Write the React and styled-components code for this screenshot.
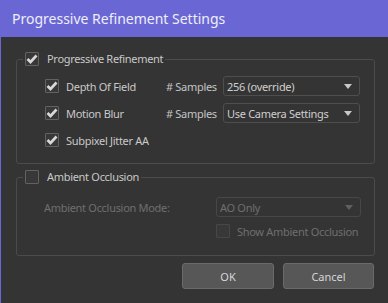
import React from "react";
import styled, { createGlobalStyle } from "styled-components";

const GlobalStyle = createGlobalStyle`
  html, body {
    margin: 0;
    padding: 0;
    background: #333333;
  }
  * {
    box-sizing: border-box;
  }
`;

const Window = styled.div`
  width: 388px;
  height: 303px;
  display: flex;
  flex-direction: column;
  background: #343434;
  border-left: 1px solid #6a67d5;
  font-family: "Noto Sans", "Open Sans", sans-serif;
  font-size: 11px;
  letter-spacing: -0.3px;
  color: #c9c9c9;
  overflow: hidden;
`;

const TitleBar = styled.div`
  height: 37px;
  flex: none;
  display: flex;
  align-items: center;
  padding-left: 11px;
  background: #6a67d5;
  color: #eeeef8;
  font-size: 14px;
  letter-spacing: 0;
`;

const Content = styled.div`
  flex: 1;
  display: flex;
  flex-direction: column;
  padding: 15px 13px 0 15px;
`;

const Group = styled.fieldset`
  margin: ${(p) => (p.$first ? "0" : "6px")} 0 0 0;
  padding: ${(p) => p.$pad};
  border: 1px solid #4b4b4b;
  border-radius: 3px;
  min-width: 0;
`;

const Legend = styled.legend`
  display: flex;
  align-items: center;
  gap: 8px;
  height: 14px;
  line-height: 14px;
  padding: 0 2px;
  margin-left: 6px;
  color: #c9c9c9;
`;

const Rows = styled.div`
  display: grid;
  grid-template-columns: 121px 57px 137px;
  grid-auto-rows: 20px;
  row-gap: 7px;
  align-items: center;
  margin-left: 28px;
`;

const CheckLabel = styled.label`
  display: flex;
  align-items: center;
  gap: 7px;
  white-space: nowrap;
  color: ${(p) => (p.$disabled ? "#6f6f6f" : "#c9c9c9")};
`;

const Box = styled.span`
  width: 14px;
  height: 14px;
  flex: none;
  display: flex;
  align-items: center;
  justify-content: center;
  border: 1px solid ${(p) => (p.$disabled ? "#474747" : "#626262")};
  border-radius: 1px;
  background: #383838;
`;

const SamplesLabel = styled.span`
  color: #c4c4c4;
  white-space: nowrap;
`;

const Select = styled.div`
  height: 20px;
  display: flex;
  align-items: center;
  justify-content: space-between;
  padding: 0 7px 0 3px;
  border: 1px solid ${(p) => (p.$disabled ? "#474747" : "#4e4e4e")};
  border-radius: 3px;
  background: #343434;
  color: ${(p) => (p.$disabled ? "#6f6f6f" : "#cfcfcf")};
  white-space: nowrap;
`;

const Arrow = styled.span`
  width: 0;
  height: 0;
  border-left: 4px solid transparent;
  border-right: 4px solid transparent;
  border-top: 5px solid ${(p) => (p.$disabled ? "#606060" : "#c8c8c8")};
`;

const AoGrid = styled.div`
  display: grid;
  grid-template-columns: 172px 145px;
  grid-template-rows: 20px 16px;
  row-gap: 6px;
  align-items: center;
  margin-left: 27px;
`;

const ModeLabel = styled.span`
  color: #6f6f6f;
  white-space: nowrap;
`;

const Buttons = styled.div`
  display: flex;
  justify-content: flex-end;
  gap: 9px;
  margin-top: 7px;
  padding-right: 1px;
`;

const Button = styled.button`
  width: ${(p) => p.$w}px;
  height: 26px;
  border: 1px solid #6a6a6a;
  border-radius: 3px;
  background: #575757;
  color: #d6d6d6;
  font-family: inherit;
  font-size: 11px;
`;

const Check = ({ checked, disabled }) => (
  <Box $disabled={disabled}>
    {checked && (
      <svg width="12" height="10" viewBox="0 0 12 10">
        <polyline
          points="1.5,5 4.5,8 10.5,1.5"
          fill="none"
          stroke="#d8d8d8"
          strokeWidth="2.6"
        />
      </svg>
    )}
  </Box>
);

const Dropdown = ({ value, disabled }) => (
  <Select $disabled={disabled}>
    <span>{value}</span>
    <Arrow $disabled={disabled} />
  </Select>
);

export default function App() {
  return (
    <>
      <GlobalStyle />
      <Window>
        <TitleBar>Progressive Refinement Settings</TitleBar>
        <Content>
          <Group $first $pad="10px 12px 13px 0">
            <Legend>
              <Check checked />
              <span>Progressive Refinement</span>
            </Legend>
            <Rows>
              <CheckLabel>
                <Check checked />
                Depth Of Field
              </CheckLabel>
              <SamplesLabel># Samples</SamplesLabel>
              <Dropdown value="256 (override)" />
              <CheckLabel>
                <Check checked />
                Motion Blur
              </CheckLabel>
              <SamplesLabel># Samples</SamplesLabel>
              <Dropdown value="Use Camera Settings" />
              <CheckLabel>
                <Check checked />
                Subpixel Jitter AA
              </CheckLabel>
            </Rows>
          </Group>
          <Group $pad="13px 12px 16px 0">
            <Legend>
              <Check />
              <span>Ambient Occlusion</span>
            </Legend>
            <AoGrid>
              <ModeLabel>Ambient Occlusion Mode:</ModeLabel>
              <Dropdown value="AO Only" disabled />
              <span />
              <CheckLabel $disabled>
                <Check disabled />
                Show Ambient Occlusion
              </CheckLabel>
            </AoGrid>
          </Group>
          <Buttons>
            <Button $w={92}>OK</Button>
            <Button $w={91}>Cancel</Button>
          </Buttons>
        </Content>
      </Window>
    </>
  );
}
